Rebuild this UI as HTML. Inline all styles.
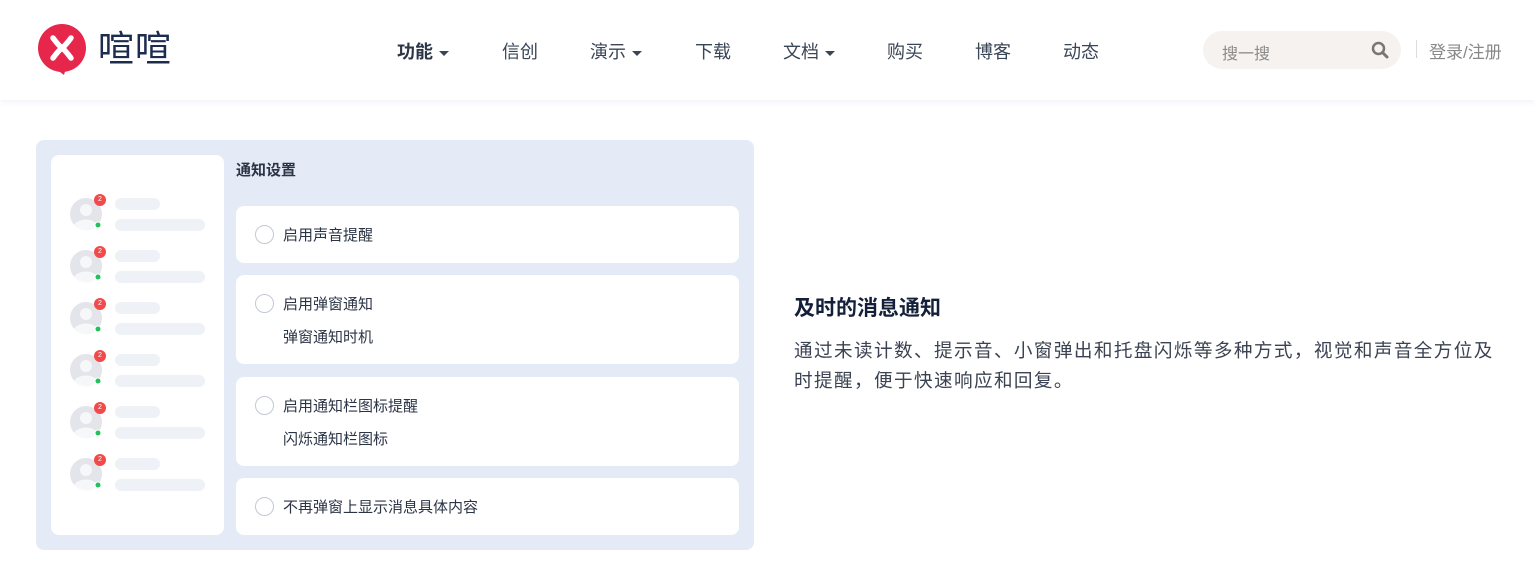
<!DOCTYPE html>
<html><head><meta charset="utf-8"><style>
*{margin:0;padding:0;box-sizing:border-box}
body{width:1535px;height:561px;background:#fff;font-family:"Liberation Sans","Noto Sans CJK SC",sans-serif;position:relative;overflow:hidden;color:#1f2d3d}
.hdr{position:absolute;left:0;top:0;width:1535px;height:100px;background:#fff;box-shadow:0 2px 6px rgba(80,90,160,.08)}
.abs{position:absolute}
.nav{position:absolute;top:38px;font-size:18px;color:#3a4556;white-space:nowrap}
.caret{display:inline-block;width:0;height:0;border-left:5px solid transparent;border-right:5px solid transparent;border-top:5px solid #3a4556;vertical-align:middle;margin-left:6px}
.panel{position:absolute;left:36px;top:140px;width:718px;height:410px;background:#e4eaf6;border-radius:8px}
.lc{position:absolute;left:51px;top:155px;width:173px;height:380px;background:#fff;border-radius:8px}
.card{position:absolute;left:236px;width:503px;background:#fff;border-radius:8px;font-size:15px;color:#2b3445}
.rad{position:absolute;left:19px;width:19px;height:19px;border:1.5px solid #c3c8d2;border-radius:50%}
.bar{position:absolute;background:#eef1f6;border-radius:6px;height:12px}
</style></head><body>
<div class="hdr">
 <svg class="abs" style="left:36px;top:24px" width="52" height="52" viewBox="0 0 52 52">
  <circle cx="26" cy="24" r="24" fill="#e6264a"/>
  <path d="M20 45 L28 51 L30 44z" fill="#e6264a"/>
  <path d="M17 14 Q23 22 26 24 Q29 22 35 14 M17 34 Q23 26 26 24 Q29 26 35 34" stroke="#fff" stroke-width="5.5" fill="none" stroke-linecap="round" stroke-linejoin="round"/>
 </svg>
 <div class="abs" style="left:98px;top:26px;font-size:36px;color:#1d2b4f;letter-spacing:1px;line-height:46px">喧喧</div>
 <div class="nav" style="left:397px;font-weight:bold;color:#2c3648">功能<span class="caret"></span></div>
 <div class="nav" style="left:502px">信创</div>
 <div class="nav" style="left:590px">演示<span class="caret"></span></div>
 <div class="nav" style="left:695px">下载</div>
 <div class="nav" style="left:783px">文档<span class="caret"></span></div>
 <div class="nav" style="left:887px">购买</div>
 <div class="nav" style="left:975px">博客</div>
 <div class="nav" style="left:1063px">动态</div>
 <div class="abs" style="left:1203px;top:31px;width:198px;height:38px;background:#f6f2ef;border-radius:19px"></div>
 <div class="abs" style="left:1222px;top:40px;font-size:16px;color:#8a8a8a">搜一搜</div>
 <svg class="abs" style="left:1371px;top:41px" width="18" height="18" viewBox="0 0 18 18"><circle cx="7.5" cy="7.5" r="5.5" stroke="#777" stroke-width="2.5" fill="none"/><path d="M11.5 11.5L16 16" stroke="#777" stroke-width="3" stroke-linecap="round"/></svg>
 <div class="abs" style="left:1416px;top:40px;width:1px;height:18px;background:#ddd"></div>
 <div class="abs" style="left:1429px;top:38px;font-size:17px;color:#888">登录/注册</div>
</div>
<div class="panel"></div>
<div class="lc"></div>
<div id="av"></div>
<div class="abs" style="left:236px;top:159px;font-size:15px;font-weight:bold;color:#2b3445">通知设置</div>
<div class="card" style="top:206px;height:57px"><div class="rad" style="top:19px"></div><div class="abs" style="left:47px;top:18px">启用声音提醒</div></div>
<div class="card" style="top:275px;height:89px"><div class="rad" style="top:19px"></div><div class="abs" style="left:47px;top:18px">启用弹窗通知</div><div class="abs" style="left:47px;top:51px">弹窗通知时机</div></div>
<div class="card" style="top:377px;height:89px"><div class="rad" style="top:19px"></div><div class="abs" style="left:47px;top:18px">启用通知栏图标提醒</div><div class="abs" style="left:47px;top:51px">闪烁通知栏图标</div></div>
<div class="card" style="top:478px;height:57px"><div class="rad" style="top:19px"></div><div class="abs" style="left:47px;top:18px">不再弹窗上显示消息具体内容</div></div>
<div class="abs" style="left:794px;top:292px;font-size:21px;font-weight:bold;color:#14203a">及时的消息通知</div>
<div class="abs" style="left:794px;top:336px;white-space:nowrap;font-size:18.6px;letter-spacing:1.4px;line-height:30px;color:#3b4352">通过未读计数、提示音、小窗弹出和托盘闪烁等多种方式，视觉和声音全方位及<br>时提醒，便于快速响应和回复。</div>
<script>
var h='';for(var i=0;i<6;i++){var y=214+i*52;
h+='<svg class="abs" style="left:69px;top:'+(y-17)+'px" width="36" height="36" viewBox="0 0 36 36"><circle cx="17" cy="17" r="16" fill="#e3e5ea"/><circle cx="17" cy="13" r="6" fill="#f6f7f9"/><path d="M5 28a13 9 0 0 1 24 0a16 16 0 0 1-24 0z" fill="#f6f7f9"/><circle cx="29" cy="28" r="3.5" fill="#fff"/><circle cx="29" cy="28" r="2.5" fill="#22c15e"/></svg>';
h+='<div class="abs" style="left:94px;top:'+(y-20)+'px;width:12px;height:12px;border-radius:50%;background:#f24a4a;color:#fff;font-size:7px;text-align:center;line-height:12px">2</div>';
h+='<div class="bar" style="left:115px;top:'+(y-16)+'px;width:45px"></div><div class="bar" style="left:115px;top:'+(y+5)+'px;width:90px"></div>';}
document.getElementById('av').innerHTML=h;
</script>
</body></html>
